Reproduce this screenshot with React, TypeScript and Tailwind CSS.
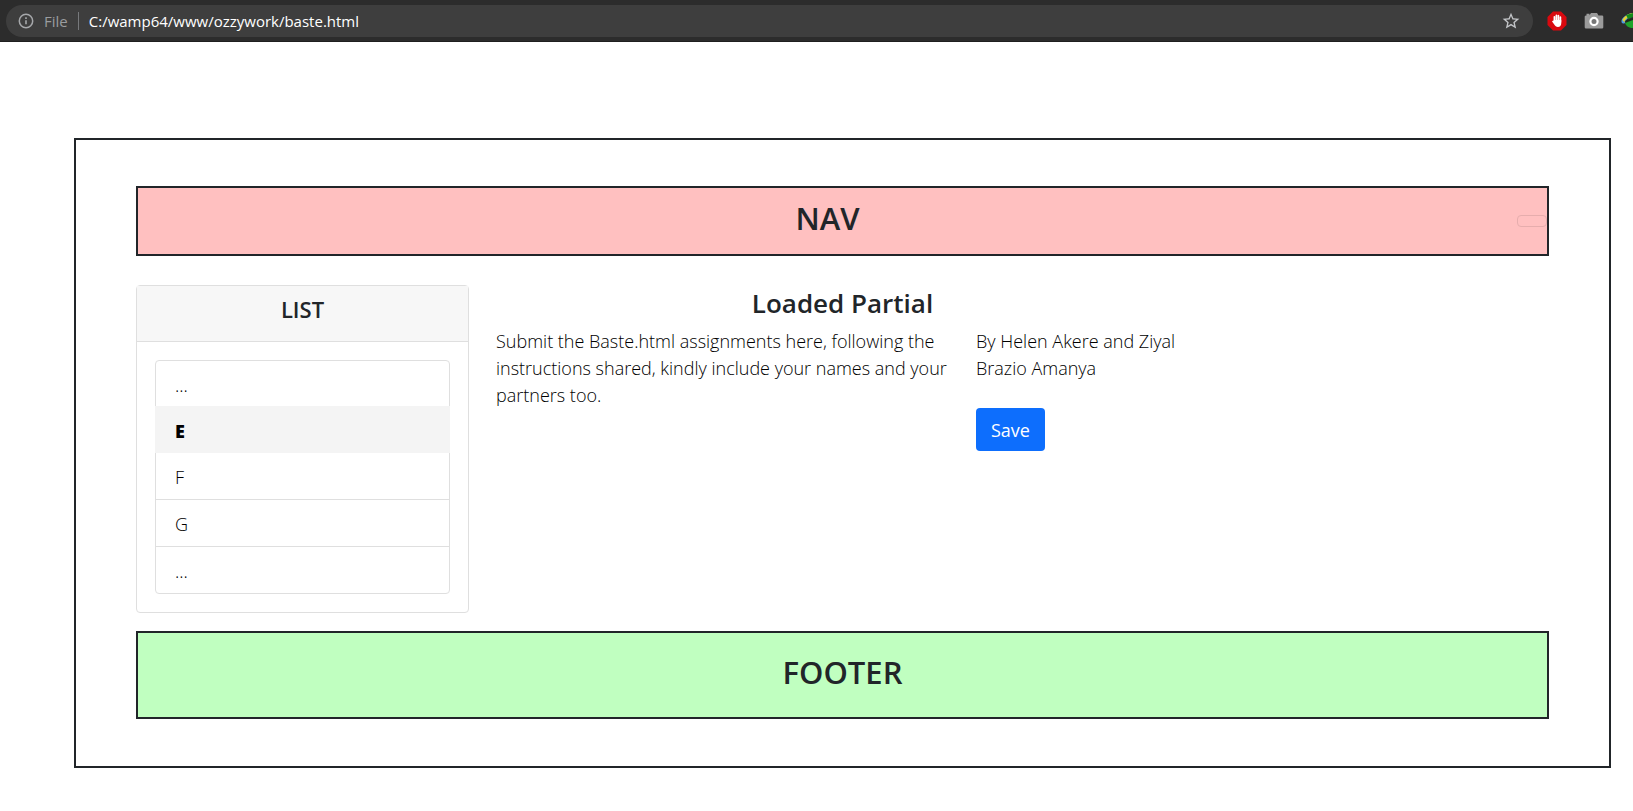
import React from "react";

function InfoIcon() {
  return (
    <svg viewBox="0 0 16 16" className="size-4 shrink-0" fill="none" stroke="#a6a8ab" strokeWidth="1.5" aria-hidden="true">
      <circle cx="8" cy="8" r="6.7" />
      <path d="M8 7.2v4M8 4.3v1.6" strokeWidth="1.6" />
    </svg>
  );
}

function StarIcon() {
  return (
    <svg viewBox="0 0 24 24" className="size-5" fill="#c3c5c8" aria-hidden="true">
      <path d="M22 9.24l-7.19-.62L12 2 9.19 8.63 2 9.24l5.46 4.73L5.82 21 12 17.27 18.18 21l-1.63-7.03L22 9.24zM12 15.4l-3.76 2.27 1-4.28-3.32-2.88 4.38-.38L12 6.1l1.71 4.04 4.38.38-3.32 2.88 1 4.28L12 15.4z" />
    </svg>
  );
}

function BlockerIcon() {
  return (
    <svg viewBox="0 0 20 20" className="size-5" aria-hidden="true">
      <path d="M6 .5h8L19.5 6v8L14 19.5H6L.5 14V6z" fill="#d9090f" />
      <path d="M7.4 11V5.8M9.4 10V4.3M11.4 10V4.6M13.4 11V6.2" stroke="#fff" strokeWidth="1.7" strokeLinecap="round" />
      <path d="M6.6 9h7.65v3.2c0 2.2-1.2 3.8-3.3 3.8-1.8 0-2.7-.8-3.7-2.4l-2.2-3c.3-.9 1-1 1.7-.3z" fill="#fff" />
    </svg>
  );
}

function CameraIcon() {
  return (
    <svg viewBox="0 0 20 18" className="h-[18px] w-5" aria-hidden="true">
      <path d="M2.5 1.8h3v1.4L7 1h6l1.5 2.5H18a1.3 1.3 0 0 1 1.3 1.3v10.4a1.3 1.3 0 0 1-1.3 1.3H2a1.3 1.3 0 0 1-1.3-1.3V4.8a1.3 1.3 0 0 1 1.8-1.3z" fill="#9b9b9b" />
      <circle cx="10" cy="9.5" r="3.6" fill="#777" stroke="#fff" strokeWidth="2.2" />
    </svg>
  );
}

function GlobeIcon() {
  return (
    <svg viewBox="0 0 12 18" className="h-[18px] w-3" aria-hidden="true">
      <path d="M.5 10C0 6 5 2 12 1v4C8 5 5 7 4 11c-1.5 1-3 .5-3.5-1z" fill="#4c9be0" />
      <path d="M1.5 8C3 4.5 7 1.5 12 1v3C7 4.5 4 7 3.5 10.5z" fill="#e8d431" />
      <path d="M5 3l7-2v4l-5 2z" fill="#138a1b" />
      <path d="M3.5 9l8.5-3v3l-6 2z" fill="#1b2a1b" />
      <path d="M4 11l8-3v8c-4 0-7-2-8-5z" fill="#1fa32a" />
    </svg>
  );
}

function BrowserBar() {
  return (
    <header className="flex h-[42px] items-center border-b border-[#1f1f1f] bg-[#2c2c2c]">
      <div className="ml-1.5 flex h-8 flex-1 items-center rounded-full bg-[#3e3e3e] pr-3 pl-3">
        <InfoIcon />
        <span className="ml-2.5 pt-0.5 text-[15px] text-[#9a9c9f]">File</span>
        <span className="mx-2.5 h-[18px] w-px bg-[#77797c]" />
        <input
          aria-label="Address"
          defaultValue="C:/wamp64/www/ozzywork/baste.html"
          className="min-w-0 flex-1 bg-transparent pt-0.5 text-[15px] text-white outline-none"
        />
        <button type="button" aria-label="Bookmark"><StarIcon /></button>
      </div>
      <div className="ml-3.5 flex items-center gap-[17px]">
        <button type="button" aria-label="Blocker"><BlockerIcon /></button>
        <button type="button" aria-label="Camera"><CameraIcon /></button>
        <button type="button" aria-label="Downloads"><GlobeIcon /></button>
      </div>
    </header>
  );
}

const items = ["...", "E", "F", "G", "..."];

function ListCard() {
  return (
    <aside className="col-span-3 rounded border border-[#dfdfdf]">
      <div className="border-b border-[#dfdfdf] bg-[#f7f7f7] pt-[9px] pb-[18px]">
        <h2 className="text-center text-[22px] leading-7 font-semibold">LIST</h2>
      </div>
      <div className="p-[18px]">
        <ul className="rounded border border-[#dfdfdf] text-black">
          {items.map((item, i) => (
            <li
              key={i}
              className={
                item === "E"
                  ? "-mx-px -mt-px bg-[#f4f4f4] px-5 pt-[11px] pb-2 font-extrabold"
                  : i === 0 || i === items.length - 1
                    ? "px-[19px] pt-2.5 pb-2"
                    : "border-b border-[#dfdfdf] px-[19px] pt-2.5 pb-2"
              }
            >
              {item}
            </li>
          ))}
        </ul>
      </div>
    </aside>
  );
}

export default function App() {
  return (
    <div className="min-h-screen bg-white font-['Open_Sans','Noto_Sans',sans-serif] text-[#212529]">
      <BrowserBar />
      <div className="mt-24 mr-[22px] ml-[74px] border-2 border-[#212529] px-[60px] pt-[46px] pb-[47px]">
        <nav className="flex items-center border-2 border-[#212529] bg-[#ffc0c0] pt-[11px] pb-[17px]">
          <h1 className="flex-1 text-center text-[31px] leading-[38px] font-semibold">NAV</h1>
          <button
            type="button"
            aria-label="Toggle navigation"
            className="mt-1.5 h-3 w-[30px] rounded border border-[#e6adad]"
          />
        </nav>
        <div className="mt-[29px] grid grid-cols-12 gap-[27px] text-[18px] leading-7 font-light">
          <ListCard />
          <main className="col-span-6">
            <h2 className="text-center text-[26px] leading-9 font-semibold">Loaded Partial</h2>
            <div className="mt-[7px] grid grid-cols-3 gap-[27px] leading-[27px]">
              <p className="col-span-2 text-black">
                Submit the Baste.html assignments here, following the instructions shared, kindly include your names and
                your partners too.
              </p>
              <div>
                <p className="text-black">By Helen Akere and Ziyal Brazio Amanya</p>
                <button
                  type="button"
                  className="mt-[26px] rounded bg-[#0d6efd] px-[15px] pt-[9px] pb-[7px] font-normal text-white"
                >
                  Save
                </button>
              </div>
            </div>
          </main>
        </div>
        <footer className="mt-[18px] border-2 border-[#212529] bg-[#c0ffc0] pt-5 pb-[26px]">
          <p className="text-center text-[31px] leading-[38px] font-semibold">FOOTER</p>
        </footer>
      </div>
    </div>
  );
}
